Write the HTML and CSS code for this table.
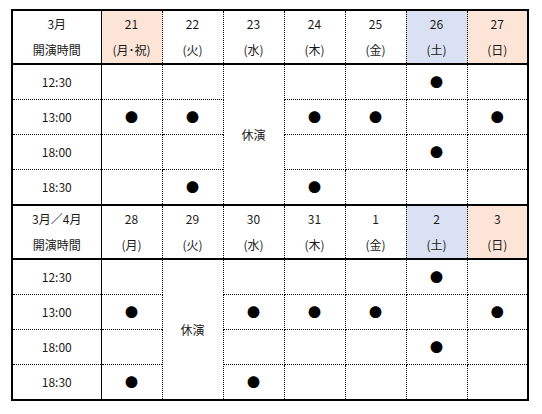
FILE: index.html
```html
<!DOCTYPE html>
<html lang="ja">
<head>
<meta charset="utf-8">
<link rel="stylesheet" href="styles.css">
</head>
<body>
<table class="sched">
  <colgroup>
    <col class="c-time">
    <col class="c-day"><col class="c-day"><col class="c-day"><col class="c-day"><col class="c-day"><col class="c-day"><col class="c-day">
  </colgroup>
  <tbody>
    <tr class="head">
      <td class="lead">3月<br>開演時間</td>
      <td class="hol">21<br>(月･祝)</td>
      <td>22<br>(火)</td>
      <td>23<br>(水)</td>
      <td>24<br>(木)</td>
      <td>25<br>(金)</td>
      <td class="sat">26<br>(土)</td>
      <td class="hol">27<br>(日)</td>
    </tr>
    <tr class="row">
      <td class="lead">12:30</td>
      <td></td><td></td>
      <td class="off" rowspan="4">休演</td>
      <td></td><td></td><td><span class="dot">●</span></td><td></td>
    </tr>
    <tr class="row">
      <td class="lead">13:00</td>
      <td><span class="dot">●</span></td><td><span class="dot">●</span></td>
      <td><span class="dot">●</span></td><td><span class="dot">●</span></td><td></td><td><span class="dot">●</span></td>
    </tr>
    <tr class="row">
      <td class="lead">18:00</td>
      <td></td><td></td>
      <td></td><td></td><td><span class="dot">●</span></td><td></td>
    </tr>
    <tr class="row">
      <td class="lead">18:30</td>
      <td></td><td><span class="dot">●</span></td>
      <td><span class="dot">●</span></td><td></td><td></td><td></td>
    </tr>
    <tr class="head">
      <td class="lead">3月／4月<br>開演時間</td>
      <td>28<br>(月)</td>
      <td>29<br>(火)</td>
      <td>30<br>(水)</td>
      <td>31<br>(木)</td>
      <td>1<br>(金)</td>
      <td class="sat">2<br>(土)</td>
      <td class="hol">3<br>(日)</td>
    </tr>
    <tr class="row">
      <td class="lead">12:30</td>
      <td></td>
      <td class="off" rowspan="4">休演</td>
      <td></td><td></td><td></td><td><span class="dot">●</span></td><td></td>
    </tr>
    <tr class="row">
      <td class="lead">13:00</td>
      <td><span class="dot">●</span></td>
      <td><span class="dot">●</span></td><td><span class="dot">●</span></td><td><span class="dot">●</span></td><td></td><td><span class="dot">●</span></td>
    </tr>
    <tr class="row">
      <td class="lead">18:00</td>
      <td></td>
      <td></td><td></td><td></td><td><span class="dot">●</span></td><td></td>
    </tr>
    <tr class="row">
      <td class="lead">18:30</td>
      <td><span class="dot">●</span></td>
      <td><span class="dot">●</span></td><td></td><td></td><td></td><td></td>
    </tr>
  </tbody>
</table>
</body>
</html>
```
FILE: styles.css
```css
html, body {
  margin: 0;
  padding: 0;
  background: #ffffff;
}

body {
  padding: 9px 0 0 11px;
  font-family: "Noto Sans CJK JP", "Noto Sans", sans-serif;
  font-size: 12px;
  color: #1a1a1a;
}

.sched {
  border-collapse: collapse;
  table-layout: fixed;
  width: 517px;
  border: 2px solid #000;
}

.c-time { width: 89px; }
.c-day { width: 61px; }

.sched td {
  padding: 0;
  text-align: center;
  vertical-align: middle;
  border: 1px dotted #000;
}

.sched td.lead {
  border-right: 1px solid #000;
}

.head td {
  height: 51px;
  line-height: 26px;
  border-top: 2px solid #000;
  border-bottom: 2px solid #000;
}

.row td {
  height: 34px;
  line-height: 16px;
}

.hol { background: #fce4d6; }
.sat { background: #d9e1f2; }

.dot {
  font-size: 13px;
  color: #000;
}
```
